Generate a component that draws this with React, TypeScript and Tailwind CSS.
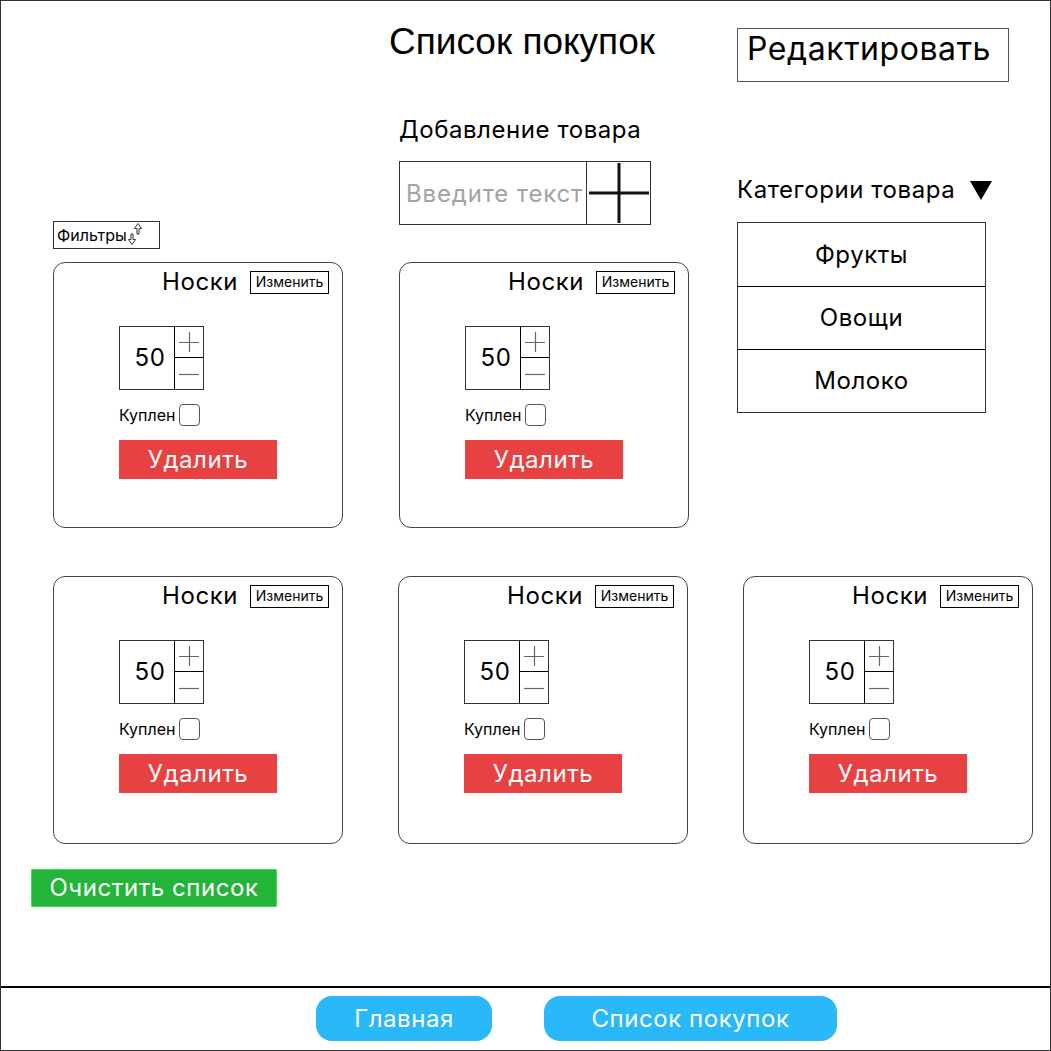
import React from "react"

const inter = "font-['Inter','Liberation_Sans',sans-serif] tracking-[0.035em]"

function Stepper({ value }: { value: number }) {
  return (
    <div className="flex w-[85px] h-[64px] border border-[#333]">
      <div className="w-[55px] h-full flex items-center justify-center border-r border-black text-[24px] leading-none pl-[6px]">
        {value}
      </div>
      <div className="flex-1 flex flex-col">
        <button className="h-1/2 flex items-center justify-center border-b border-black">
          <svg width="20" height="20" viewBox="0 0 20 20">
            <path d="M0 10.5H20M10.5 0V20" stroke="#666" strokeWidth="1.2" />
          </svg>
        </button>
        <button className="h-1/2 flex items-center justify-center">
          <svg width="20" height="20" viewBox="0 0 20 20">
            <path d="M0 10.5H20" stroke="#666" strokeWidth="1.2" />
          </svg>
        </button>
      </div>
    </div>
  )
}

function ItemCard({ tall, className = "" }: { tall?: boolean; className?: string }) {
  return (
    <div className={`w-[290px] ${tall ? "h-[268px]" : "h-[266px]"} border border-[#444] rounded-[12px] flex flex-col ${className}`}>
      <div className="flex justify-end items-center gap-[12px] pt-[7px] pr-[13px]">
        <span className="text-[24px] leading-none">Носки</span>
        <button className="w-[79px] h-[23px] border border-black text-[14px] tracking-normal leading-none flex items-center justify-center">
          Изменить
        </button>
      </div>
      <div className="pl-[65px] flex flex-col">
        <div className="mt-[32px]">
          <Stepper value={50} />
        </div>
        <div className="mt-[14px] flex items-center gap-[3px]">
          <span className="text-[16px] leading-none tracking-normal">Куплен</span>
          <span className="w-[21px] h-[22px] border border-[#555] rounded-[4px]" />
        </div>
        <button className="mt-[14px] w-[158px] h-[39px] bg-[#e84142] text-white text-[24px] leading-none flex items-center justify-center">
          Удалить
        </button>
      </div>
    </div>
  )
}

function SortIcon() {
  return (
    <svg width="16" height="24" viewBox="0 0 16 24" className="-mt-[2px]">
      {/* down arrow, lower left */}
      <path d="M4 12V17.5H1.5L5 22.5L8.5 17.5H6V12Z" fill="none" stroke="#333" strokeWidth="1" />
      {/* up arrow, upper right */}
      <path d="M10 12V6.5H7.5L11 1.5L14.5 6.5H12V12Z" fill="none" stroke="#333" strokeWidth="1" />
    </svg>
  )
}

export default function App() {
  const categories = ["Фрукты", "Овощи", "Молоко"]

  return (
    <div className={`w-[1051px] h-[1051px] border border-[#333] bg-white text-black flex flex-col ${inter}`}>
      <main className="flex-1 grid grid-cols-[346px_338px_1fr] pl-[52px]">
        {/* left column */}
        <div className="flex flex-col items-start">
          <button className="mt-[220px] h-[28px] w-[107px] border border-[#333] flex items-center pl-[3px] text-[16px] tracking-normal leading-none">
            Фильтры
            <SortIcon />
          </button>
          <ItemCard className="mt-[13px]" />
          <ItemCard tall className="mt-[48px]" />
          <button className="mt-[25px] -ml-[22px] w-[246px] h-[38px] bg-[#23b53a] border border-[#3de05a] text-white text-[24px] leading-none flex items-center justify-center">
            Очистить список
          </button>
        </div>

        {/* middle column */}
        <div className="flex flex-col items-start">
          <h1 className="mt-[22px] -ml-[10px] font-['Liberation_Sans',Arial,sans-serif] tracking-normal text-[37px] leading-none">
            Список покупок
          </h1>
          <h2 className="mt-[58px] text-[24px] leading-none">Добавление товара</h2>
          <div className="mt-[19px] w-[252px] h-[64px] border border-[#333] flex">
            <input
              placeholder="Введите текст"
              className="w-[187px] h-full pl-[6px] text-[24px] tracking-[0.035em] leading-none outline-none placeholder:text-[#a3a3a3] border-r border-[#333]"
            />
            <button className="flex-1 flex items-center justify-center">
              <svg width="60" height="60" viewBox="0 0 60 60">
                <path d="M0 30H60M30 0V60" stroke="#111" strokeWidth="3" />
              </svg>
            </button>
          </div>
          <ItemCard className="mt-[37px]" />
          <ItemCard tall className="mt-[48px] -ml-[1px]" />
        </div>

        {/* right column */}
        <div className="flex flex-col items-start">
          <button className="mt-[27px] w-[272px] h-[54px] border border-[#555] text-[32px] leading-none flex items-center pl-[9px] pb-[12px]">
            Редактировать
          </button>
          <div className="mt-[96px] flex items-center gap-[15px]">
            <span className="text-[24px] leading-none">Категории товара</span>
            <svg width="22" height="19" viewBox="0 0 22 19">
              <path d="M0 0H22L11 19Z" fill="#000" />
            </svg>
          </div>
          <ul className="mt-[20px] w-[249px] border border-[#333]">
            {categories.map((c, i) => (
              <li
                key={c}
                className={`h-[63px] flex items-center justify-center text-[24px] leading-none ${i > 0 ? "border-t border-black" : ""}`}
              >
                {c}
              </li>
            ))}
          </ul>
          <ItemCard tall className="mt-[163px] ml-[6px]" />
        </div>
      </main>

      <footer className="h-[64px] shrink-0 border-t-2 border-black flex items-start gap-[52px] pt-[8px] pl-[315px]">
        <button className="w-[176px] h-[45px] rounded-[16px] bg-[#29b8f8] text-white text-[24px] leading-none flex items-center justify-center">
          Главная
        </button>
        <button className="w-[293px] h-[45px] rounded-[16px] bg-[#29b8f8] text-white text-[24px] leading-none flex items-center justify-center">
          Список покупок
        </button>
      </footer>
    </div>
  )
}
